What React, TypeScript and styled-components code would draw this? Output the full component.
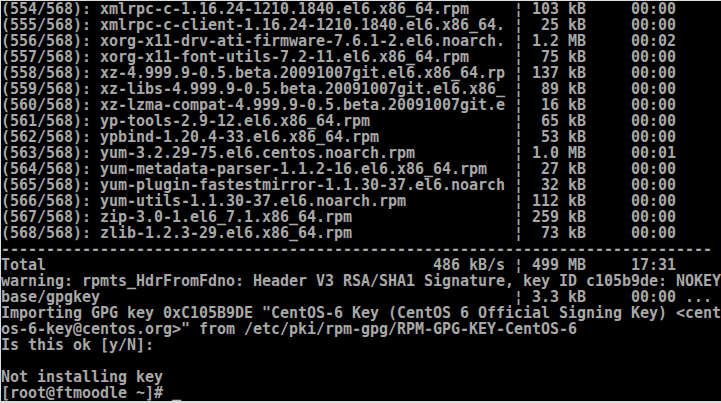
import React from "react";
import styled, { createGlobalStyle } from "styled-components";

const Global = createGlobalStyle`
  html, body {
    margin: 0;
    padding: 0;
    background: #000;
  }
`;

const Screen = styled.div`
  box-sizing: content-box;
  width: 720px;
  height: 400px;
  background: #000;
  border-top: 1px solid #dcdcdc;
  border-left: 1px solid #dcdcdc;
  border-bottom: 2px solid #dcdcdc;
  overflow: hidden;
  display: flex;
  flex-direction: column;
`;

const Line = styled.div`
  height: 16px;
  line-height: 16px;
  white-space: pre;
  font-family: "DejaVu Sans Mono", "Liberation Mono", monospace;
  font-size: 15px;
  font-weight: bold;
  letter-spacing: -0.03px;
  color: #a8a8a8;
`;

const Cursor = styled.span`
  color: #b4b4b4;
`;

const pad = (s: string, n: number) => (s.length >= n ? s.slice(0, n) : s + " ".repeat(n - s.length));
const lpad = (s: string, n: number) => (s.length >= n ? s : " ".repeat(n - s.length) + s);

type Pkg = [number, string, string, string, string];

const pkgs: Pkg[] = [
  [554, "xmlrpc-c-1.16.24-1210.1840.el6.x86_64.rpm", "103", "kB", "00:00"],
  [555, "xmlrpc-c-client-1.16.24-1210.1840.el6.x86_64.", "25", "kB", "00:00"],
  [556, "xorg-x11-drv-ati-firmware-7.6.1-2.el6.noarch.", "1.2", "MB", "00:02"],
  [557, "xorg-x11-font-utils-7.2-11.el6.x86_64.rpm", "75", "kB", "00:00"],
  [558, "xz-4.999.9-0.5.beta.20091007git.el6.x86_64.rp", "137", "kB", "00:00"],
  [559, "xz-libs-4.999.9-0.5.beta.20091007git.el6.x86_", "89", "kB", "00:00"],
  [560, "xz-lzma-compat-4.999.9-0.5.beta.20091007git.e", "16", "kB", "00:00"],
  [561, "yp-tools-2.9-12.el6.x86_64.rpm", "65", "kB", "00:00"],
  [562, "ypbind-1.20.4-33.el6.x86_64.rpm", "53", "kB", "00:00"],
  [563, "yum-3.2.29-75.el6.centos.noarch.rpm", "1.0", "MB", "00:01"],
  [564, "yum-metadata-parser-1.1.2-16.el6.x86_64.rpm", "27", "kB", "00:00"],
  [565, "yum-plugin-fastestmirror-1.1.30-37.el6.noarch", "32", "kB", "00:00"],
  [566, "yum-utils-1.1.30-37.el6.noarch.rpm", "112", "kB", "00:00"],
  [567, "zip-3.0-1.el6_7.1.x86_64.rpm", "259", "kB", "00:00"],
  [568, "zlib-1.2.3-29.el6.x86_64.rpm", "73", "kB", "00:00"],
];

const pkgLine = ([n, name, size, unit, time]: Pkg) =>
  `(${n}/568): ` + pad(name, 45) + " ¦ " + lpad(size, 3) + " " + unit + "     " + time;

const lines: string[] = [
  ...pkgs.map(pkgLine),
  "-".repeat(79),
  pad("Total", 48) + "486 kB/s ¦ 499 MB     17:31",
  "warning: rpmts_HdrFromFdno: Header V3 RSA/SHA1 Signature, key ID c105b9de: NOKEY",
  pad("base/gpgkey", 57) + "¦ 3.3 kB     00:00 ...",
  'Importing GPG key 0xC105B9DE "CentOS-6 Key (CentOS 6 Official Signing Key) <cent',
  'os-6-key@centos.org>" from /etc/pki/rpm-gpg/RPM-GPG-KEY-CentOS-6',
  "Is this ok [y/N]:",
  "",
  "Not installing key",
];

export default function App() {
  return (
    <>
      <Global />
      <Screen>
        {lines.map((l, i) => (
          <Line key={i}>{l}</Line>
        ))}
        <Line>
          [root@ftmoodle ~]# <Cursor>_</Cursor>
        </Line>
      </Screen>
    </>
  );
}
